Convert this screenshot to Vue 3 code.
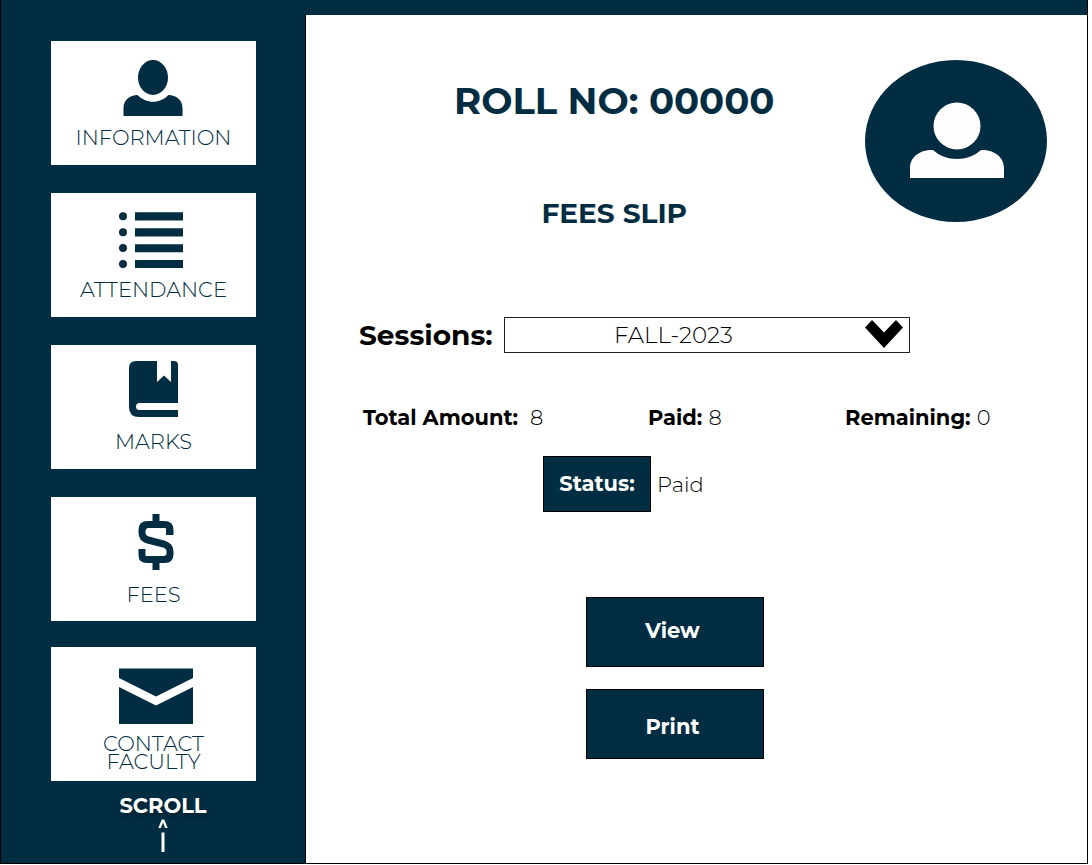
<script setup>
import { ref } from 'vue'

const session = ref('FALL-2023')
const sessions = ['FALL-2023']
const totals = [
  { label: 'Total Amount:', value: '8' },
  { label: 'Paid:', value: '8' },
  { label: 'Remaining:', value: '0' },
]
</script>

<template>
  <div class="frame">
    <div class="topbar"></div>
    <nav class="sidebar" aria-label="Student menu">
      <a class="card" href="#information">
        <svg class="icon person" width="60" height="56" viewBox="0 0 60 56" aria-hidden="true">
          <ellipse cx="30" cy="17.500" rx="15" ry="17.500" />
          <path d="M0.500 56V48C0.500 40 7 35 14.500 35C23 44 37 44 45.500 35C53 35 59.500 40 59.500 48V56Z" />
        </svg>
        <span>INFORMATION</span>
      </a>
      <a class="card" href="#attendance">
        <svg class="icon list" width="64" height="56" viewBox="0 0 64 56" aria-hidden="true">
          <circle cx="4" cy="4.300" r="4" /><circle cx="4" cy="20.200" r="4" />
          <circle cx="4" cy="36" r="4" /><circle cx="4" cy="52" r="4" />
          <path d="M16 0.300H64V8.500H16ZM16 16.200H64V24.500H16ZM16 32.200H64V40.200H16ZM16 48H64V56H16Z" />
        </svg>
        <span>ATTENDANCE</span>
      </a>
      <a class="card" href="#marks">
        <svg class="icon" width="49" height="56" viewBox="0 0 49 56" aria-hidden="true">
          <path d="M7 0H28V21L35 14.500L42 21V0H45Q49 0 49 4V42H10.500Q7 42 7 45.500Q7 49 10.500 49H49V56H10Q0 56 0 46V7Q0 0 7 0Z" />
        </svg>
        <span>MARKS</span>
      </a>
      <a class="card" href="#fees">
        <svg class="icon dollar" width="36" height="56" viewBox="0 0 36 56" aria-hidden="true">
          <path d="M14.500 0H21.500V7H26Q35.500 7 35.500 16V21H28V15Q28 14 27 14H10.500Q7.500 14 7.500 17.500V18.500Q7.500 21.500 11 22.500L27 26.800Q35.500 29.500 35.500 38V40Q35.500 49 26.500 49H21.500V56H14.500V49H9Q0.500 49 0.500 41V35H7.500V41Q7.500 42 8.500 42H25.500Q28.500 42 28.500 39V37.500Q28.500 34.500 25 33.500L9 29.500Q0.500 27 0.500 18.500V16Q0.500 7 9.500 7H14.500Z" />
        </svg>
        <span>FEES</span>
      </a>
      <a class="card contact" href="#contact">
        <svg class="icon envelope" width="74" height="56" viewBox="0 0 74 56" aria-hidden="true">
          <path d="M0 0.500H74V10L37 28.500L0 10ZM0 19L37 37.500L74 19V56H0Z" />
        </svg>
        <span>CONTACT<br />FACULTY</span>
      </a>
      <div class="scroll">
        <span>SCROLL</span>
        <svg width="10" height="34" viewBox="0 0 10 34" aria-hidden="true">
          <path d="M0.300 9L3.800 0.500H6.200L9.700 9H7.100L5 3.500L2.900 9Z" />
          <path d="M3.500 13.500H6.500V33H3.500Z" />
        </svg>
      </div>
    </nav>

    <main class="main">
      <header class="header">
        <div class="titles">
          <h1>ROLL NO: 00000</h1>
          <h2>FEES SLIP</h2>
        </div>
        <svg class="avatar" width="182" height="162" viewBox="0 0 182 162" role="img" aria-label="Student">
          <ellipse cx="91" cy="81" rx="91" ry="81" />
          <circle class="light" cx="92" cy="66" r="23.500" />
          <path class="light" d="M45 118V108C45 97 55 89.500 68 90C81 102 103 102 116 90C129 89.500 139 97 139 108V118Z" />
        </svg>
      </header>

      <div class="session">
        <label for="session">Sessions:</label>
        <div class="picker">
          <select id="session" v-model="session">
            <option v-for="s in sessions" :key="s">{{ s }}</option>
          </select>
          <svg class="chevron" width="38" height="28" viewBox="0 0 38 28" aria-hidden="true">
            <path d="M7 0L19 12.500L31 0L38 7.500L19 28L0 7.500Z" />
          </svg>
        </div>
      </div>

      <dl class="totals">
        <div v-for="t in totals" :key="t.label">
          <dt>{{ t.label }}</dt>
          <dd>{{ t.value }}</dd>
        </div>
      </dl>

      <div class="status">
        <strong>Status:</strong>
        <span>Paid</span>
      </div>

      <div class="actions">
        <button type="button">View</button>
        <button type="button">Print</button>
      </div>
    </main>
  </div>
</template>

<style>
body {
  margin: 0;
  background: #fff;
}
</style>

<style scoped>
* {
  box-sizing: border-box;
}
.frame {
  --navy: #002d42;
  display: grid;
  grid-template-columns: 305px 1fr;
  grid-template-rows: 15px 1fr;
  min-height: calc(100vh - 1px);
  margin: 0 4px 1px 0;
  border: 1px solid #000;
  border-top: 0;
  background: #fff;
  color: #000;
  font-family: Montserrat, Inter, "Open Sans", sans-serif;
  font-size: 21px;
}
.topbar {
  grid-column: 1 / -1;
  background: var(--navy);
}
.sidebar {
  display: flex;
  flex-direction: column;
  gap: 28px;
  padding: 26px 49px 0 50px;
  border-right: 1px solid #000;
  background: var(--navy);
}
.card {
  display: flex;
  flex-direction: column;
  align-items: center;
  height: 124px;
  padding-top: 19px;
  background: #fff;
  color: var(--navy);
  font-weight: 300;
  line-height: 18px;
  text-align: center;
  text-decoration: none;
}
.card span {
  margin-top: 13px;
}
.card:nth-child(3),
.card:nth-child(4) {
  padding-top: 16px;
}
.card:nth-child(4) {
  padding-top: 17px;
}
.card:nth-child(3) span,
.card:nth-child(4) span {
  margin-top: 16px;
}
.icon {
  flex: none;
  fill: currentColor;
}
.person {
  margin-right: 1px;
}
.list {
  margin-right: 6px;
}
.dollar,
.envelope {
  margin-left: 5px;
}
.contact {
  height: 134px;
  margin-top: -2px;
  padding-top: 21px;
}
.contact span {
  margin-top: 11px;
}
.scroll {
  display: flex;
  flex-direction: column;
  align-items: center;
  gap: 2px;
  margin: -14px 0 0 19px;
  color: #fff;
  font-weight: 700;
  line-height: 22px;
  text-shadow: 0 3px 4px rgba(0, 0, 0, 0.3);
}
.scroll svg {
  fill: #fff;
}
.main {
  padding: 45px 40px 24px 53px;
}
.header {
  display: flex;
  justify-content: space-between;
  padding-left: 95px;
}
.titles {
  padding-top: 19px;
  color: var(--navy);
  text-align: center;
}
h1,
h2 {
  margin: 0;
  font-weight: 700;
}
h1 {
  font-size: 37px;
  line-height: 44px;
}
h2 {
  margin-top: 74px;
  font-size: 28px;
  line-height: 32px;
}
.avatar {
  flex: none;
  fill: var(--navy);
}
.light {
  fill: #fffcfe;
}
.session {
  display: flex;
  align-items: center;
  margin-top: 88px;
}
.session label {
  flex: none;
  width: 145px;
  font-size: 28px;
  font-weight: 700;
}
.picker {
  position: relative;
  flex: 0 1 406px;
}
select {
  appearance: none;
  display: block;
  width: 100%;
  height: 36px;
  padding: 0 50px 0 109px;
  border: 1px solid #222;
  border-radius: 0;
  background: #fff;
  color: #000;
  font: inherit;
  font-size: 23px;
  font-weight: 300;
}
.chevron {
  position: absolute;
  top: 3px;
  right: 7px;
  pointer-events: none;
}
.totals {
  display: grid;
  grid-template-columns: 285px 197px 1fr;
  margin: 53px 0 0 4px;
  line-height: 24px;
}
.totals div {
  display: flex;
  gap: 6px;
  white-space: nowrap;
}
.totals div:first-child {
  gap: 12px;
}
dt {
  font-weight: 700;
}
dd {
  margin: 0;
  font-weight: 300;
}
.status {
  display: flex;
  align-items: center;
  gap: 6px;
  margin: 26px 0 0 184px;
}
.status strong {
  width: 108px;
  border: 1px solid #000;
  background: var(--navy);
  color: #fff;
  line-height: 54px;
  text-align: center;
}
.status span {
  font-weight: 300;
}
.actions {
  display: flex;
  flex-direction: column;
  gap: 22px;
  width: 178px;
  margin: 85px 0 0 227px;
}
button {
  height: 70px;
  padding: 0 5px 0 0;
  border: 1px solid #000;
  background: var(--navy);
  color: #fff;
  font: inherit;
  font-weight: 700;
}
button:first-child {
  padding-bottom: 4px;
}
button:last-child {
  padding-top: 5px;
}
</style>
